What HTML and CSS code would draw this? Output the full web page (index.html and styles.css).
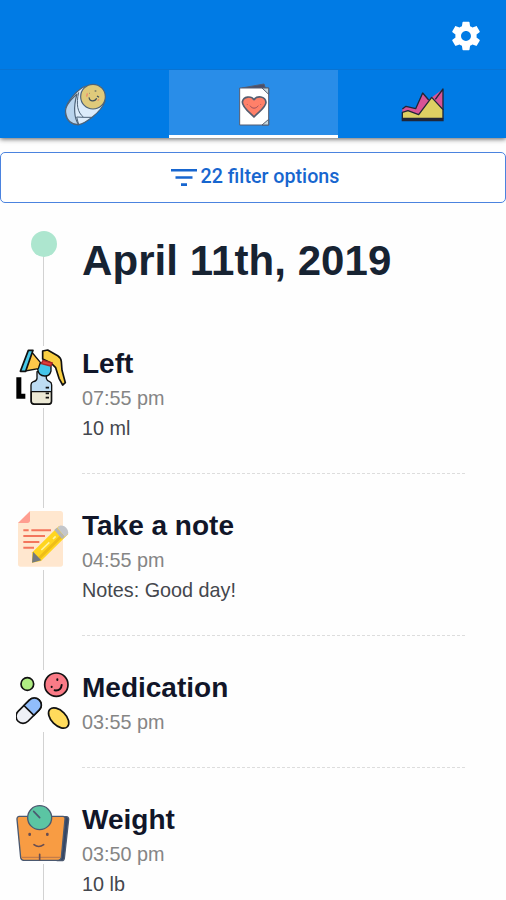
FILE: index.html
```html
<!DOCTYPE html>
<html lang="en">
<head>
<meta charset="utf-8">
<title>Baby log</title>
<link rel="stylesheet" href="styles.css">
</head>
<body>
<header class="header">
  <div class="toolbar">
    <svg class="gear" viewBox="0 0 24 24"><path d="M19.43 12.98c.04-.32.07-.64.07-.98s-.03-.66-.07-.98l2.11-1.65c.19-.15.24-.42.12-.64l-2-3.46c-.12-.22-.39-.3-.61-.22l-2.49 1c-.52-.4-1.08-.73-1.69-.98l-.38-2.65C14.46 2.18 14.25 2 14 2h-4c-.25 0-.46.18-.49.42l-.38 2.65c-.61.25-1.17.59-1.69.98l-2.49-1c-.23-.09-.49 0-.61.22l-2 3.46c-.13.22-.07.49.12.64l2.11 1.65c-.04.32-.07.65-.07.98s.03.66.07.98l-2.11 1.65c-.19.15-.24.42-.12.64l2 3.46c.12.22.39.3.61.22l2.49-1c.52.4 1.08.73 1.69.98l.38 2.65c.03.24.24.42.49.42h4c.25 0 .46-.18.49-.42l.38-2.65c.61-.25 1.17-.59 1.69-.98l2.49 1c.23.09.49 0 .61-.22l2-3.46c.12-.22.07-.49-.12-.64l-2.11-1.65zM12 15.5c-1.93 0-3.5-1.57-3.5-3.5s1.57-3.5 3.5-3.5 3.5 1.57 3.5 3.5-1.57 3.5-3.5 3.5z"/></svg>
  </div>
  <nav class="tabs">
    <a class="tab">
      <svg class="tab-icon" viewBox="13 3 180 168" fill="none" stroke="#4c6278" stroke-width="3.5" stroke-linejoin="round">
        <path d="M104 34C84 40 49 78 45 103C41 130 57 150 84 149C103 146 151 112 163 79Z" fill="#dcecfb"/>
        <path d="M79 57C53 80 42 97 45 113C48 137 64 150 84 149C71 132 67 98 79 57Z" fill="#b9d4ed"/>
        <path d="M84 52C76 88 80 112 99 127H123M84 149L78 126L99 127" stroke-width="3"/>
        <circle cx="127" cy="65" r="37" fill="#dfca7b"/>
        <path d="M115 67C117 81 134 80 138 70M116 55h1M132 48h5M139 63l6 4" stroke="#40505b"/>
        <path d="M110 55l-2 10M145 73l-4 4" stroke="#ef806a"/>
      </svg>
    </a>
    <a class="tab active">
      <svg class="tab-icon" viewBox="-5 3 180 168" stroke="#555d70" stroke-width="3" stroke-linejoin="round">
        <path d="M48 39L115 27L119 39V43H48Z" fill="#4a4f68"/>
        <path d="M42 39H129V150H42Z" fill="#fff"/>
        <path d="M109 39H129V58ZM109 150L129 133V150Z" fill="#c7d8dd"/>
        <path d="M85 74C77 62 53 63 50 81C50 98 74 114 85 126C98 111 121 98 121 82C119 63 94 61 85 74Z" fill="#ff8069" stroke-width="5"/>
        <path d="M65 87v2M105 87v2M73 92C79 102 91 102 98 92" fill="none" stroke="#9e505a"/>
      </svg>
    </a>
    <a class="tab">
      <svg class="tab-icon" viewBox="5 3 180 168" stroke="#202638" stroke-width="4" stroke-linejoin="round">
        <path d="M36 130V102L47 94L76 101L97 54L117 76L126 66L158 42V130Z" fill="#d75396" stroke="none"/>
        <path d="M36 102L47 94L76 101L97 54L115 75M135 73L158 42V105" fill="none"/>
        <path d="M36 130V112L53 107L85 119L124 67L158 104V130Z" fill="#ddcf63"/>
        <path d="M34 134H160" stroke-width="9"/>
      </svg>
    </a>
  </nav>
</header>
<button class="filter">
  <svg class="filter-icon" viewBox="0 0 26 18"><path d="M0 0H26V2.6H0ZM4.5 7.2H21.5V9.8H4.5ZM10 14.3H16V17H10Z"/></svg>
  <span>22 filter options</span>
</button>
<main class="timeline">
  <div class="day"><span class="dot"></span><h1>April 11th, 2019</h1></div>
  <article class="entry">
    <svg class="icon" viewBox="33 33 165 186" stroke="#111" stroke-width="4" stroke-linejoin="round">
      <path d="M96 110H124V130Q126 138 134 140Q140 143 140 150V199Q140 208 131 208H88Q78 208 78 199V150Q78 143 85 140Q95 138 96 130Z" fill="#bddcf3"/>
      <path d="M79 170H139V199Q139 207 131 207H88Q79 207 79 199Z" fill="#ece9d5"/>
      <path d="M122 158h10M122 175h10M122 188h10" fill="none" stroke-width="5"/>
      <path d="M113 48L128 45L158 62Q168 68 169 80L171 106L181 143L173 150L162 130L152 98L138 84L113 72Z" fill="#f9cf43" stroke-width="5"/>
      <path d="M98 103Q98 84 114 82L138 88V108Q134 124 119 123Q101 122 98 103Z" fill="#45c5ea"/>
      <path d="M80 51L106 82L100 101L60 108Z" fill="#fec84a"/>
      <path d="M70 46H84L62 109H46Z" fill="#49c9e9" stroke-width="5"/>
      <path d="M114 76L142 84L137 93L109 86Z" fill="#e33e3c" stroke="#a62628"/>
      <path d="M34 127H49V176H61V191H34Z" fill="#000" stroke="none"/>
    </svg>
    <div class="body"><h2>Left</h2><time>07:55 pm</time><p>10 ml</p><hr></div>
  </article>
  <article class="entry">
    <svg class="icon" viewBox="33 24 165 186">
      <path d="M75 33H166Q174 33 174 41V192Q174 200 166 200H47Q39 200 39 192V69Z" fill="#ffe7cf"/>
      <path d="M75 34V61Q75 69 67 69H39Z" fill="#ff9e91"/>
      <path d="M55 91H71M79 91H138M55 108H120M55 126H103M55 143H87" stroke="#f3755d" stroke-width="6"/>
      <path d="M82 157L162 78L190 102L108 183L81 188Z" fill="#ffd51f"/>
      <path d="M103 174L176 102" stroke="#efbd18" stroke-width="9"/>
      <path d="M109 150L133 127M144 117L152 109" stroke="#fff3a0" stroke-width="5"/>
      <path d="M157 83L164 77Q180 75 188 90Q192 98 187 105L179 111Z" fill="#c4c6ca"/>
      <path d="M155 83L179 111L171 117L148 90Z" fill="#b5b5b5"/>
      <path d="M84 155L109 181L81 188Z" fill="#737980"/>
    </svg>
    <div class="body"><h2>Take a note</h2><time>04:55 pm</time><p>Notes: Good day!</p><hr></div>
  </article>
  <article class="entry">
    <svg class="icon" viewBox="33 30 165 186" stroke="#111" stroke-width="5" stroke-linecap="round">
      <circle cx="67" cy="72" r="19" fill="#b0ed83"/>
      <circle cx="154" cy="74" r="35" fill="#fa7b87"/>
      <path d="M140 80v1M157 58v2M149 91Q168 93 170 75" fill="none" stroke-width="6"/>
      <g transform="rotate(-45 71 152)">
        <rect x="26" y="131" width="90" height="42" rx="21" fill="#eef0f6"/>
        <path d="M72 131H95A21 21 0 0 1 95 173H72Z" fill="#91bdfb"/>
      </g>
      <ellipse cx="161" cy="174" rx="37" ry="22" transform="rotate(45 161 174)" fill="#ffdb5c"/>
    </svg>
    <div class="body"><h2>Medication</h2><time>03:55 pm</time><hr></div>
  </article>
  <article class="entry">
    <svg class="icon" viewBox="33 21 165 186" stroke="#4b5970" stroke-width="4" stroke-linecap="round">
      <path d="M155 65H184Q191 66 191 73L178 190Q177 197 170 197H157Z" fill="#344665"/>
      <path d="M42 64H174Q181 64 180 72L169 187Q168 195 160 196H56Q48 195 47 188L36 73Q35 65 42 64Z" fill="#f89c43"/>
      <path d="M50 187H164" stroke="#c57d49"/>
      <circle cx="104" cy="68" r="36" fill="#5bc5a3"/>
      <path d="M86 49L104 68" fill="none" stroke-width="5"/>
      <g stroke="#674d52" fill="none"><path d="M74 117v2M127 117v2" stroke-width="8"/><path d="M87 149Q101 160 116 149M104 178v17" stroke-width="5"/></g>
    </svg>
    <div class="body"><h2>Weight</h2><time>03:50 pm</time><p>10 lb</p></div>
  </article>
</main>
</body>
</html>
```
FILE: styles.css
```css
* { box-sizing: border-box; }
html { overflow: hidden; }
body { margin: 0; height: 900px; overflow: hidden; display: flex; flex-direction: column; background: #fefefe; color: #172332; font-family: "Liberation Sans", Arial, sans-serif; }
h1, h2, p { margin: 0; }
svg { display: block; flex: none; }
.header { flex: none; background: #007be5; box-shadow: 0 1px 5px rgba(0, 0, 0, .65); }
.toolbar { height: 70px; display: flex; align-items: center; justify-content: flex-end; padding: 2px 23px 0 0; border-bottom: 1px solid #0873d2; }
.gear { width: 34px; height: 34px; fill: #fff; }
.tabs { height: 68px; display: grid; grid-template-columns: 169px 169px 168px; }
.tab { display: flex; align-items: center; justify-content: center; }
.tab.active { background: #298de8; box-shadow: inset 0 -3px #fff; }
.tab-icon { width: 60px; height: 56px; }
.filter { flex: none; width: 506px; height: 51px; margin: 14px 0 0; padding: 0 0 2px 4px; display: flex; align-items: center; justify-content: center; gap: 4px; border: 1px solid #4b83df; border-radius: 5px; background: #fff; color: #1766cf; font: 500 19.7px Roboto, sans-serif; }
.filter-icon { width: 26px; height: 18px; margin-top: 2px; fill: #1766cf; }
.timeline { flex: 1; min-height: 0; overflow: hidden; position: relative; margin-top: 28px; }
.timeline::before { content: ""; position: absolute; left: 43px; top: 13px; bottom: 0; width: 1px; background: #d2d2d2; }
.day { height: 115px; display: flex; align-items: flex-start; padding-left: 31px; position: relative; }
.dot { width: 26px; height: 26px; border-radius: 50%; background: #ade6cf; }
h1 { margin: 5px 0 0 25px; font-size: 42px; line-height: 50px; letter-spacing: .08px; white-space: nowrap; }
.entry { position: relative; display: flex; align-items: flex-start; padding: 0 41px 34px 16px; }
.entry:last-child { padding-bottom: 0; }
.icon { width: 55px; height: 62px; background: #fefefe; }
.body { flex: 1; margin-left: 11px; }
h2 { font-size: 28px; line-height: 35px; margin-bottom: 2px; color: #111629; }
time, p { display: block; font-size: 19.8px; line-height: 30px; }
time { color: #858585; }
p { color: #44474d; }
hr { border: 0; border-top: 1px dashed #ddd; margin: 30px 0 0; }
```
